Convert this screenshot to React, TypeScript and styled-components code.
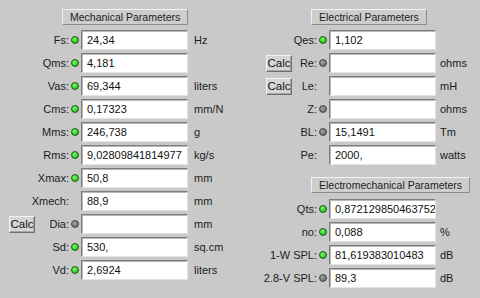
import React from "react";
import styled, { createGlobalStyle } from "styled-components";

const GlobalStyle = createGlobalStyle`
  html, body {
    margin: 0;
    padding: 0;
    background: #c9c9c9;
  }
  body {
    font-family: "Liberation Sans", Arial, sans-serif;
    font-size: 11px;
    color: #1c1c1c;
  }
`;

const Window = styled.div`
  width: 480px;
  height: 298px;
  display: flex;
  background: #c9c9c9;
  overflow: hidden;
`;

const Column = styled.div<{ $padLeft: number }>`
  width: 240px;
  padding: 9px 0 0 ${(p) => p.$padLeft}px;
  box-sizing: border-box;
  display: flex;
  flex-direction: column;
`;

const SectionTitle = styled.div<{ $indent: number; $top?: number }>`
  align-self: flex-start;
  margin: ${(p) => p.$top || 0}px 0 0 ${(p) => p.$indent}px;
  height: 16px;
  padding: 0 7px;
  display: flex;
  align-items: center;
  font-size: 10.5px;
  color: #222;
  background: #cdcdcd;
  border: 1px solid;
  border-color: #f2f2f2 #8c8c8c #8c8c8c #f2f2f2;
  box-sizing: border-box;
  white-space: nowrap;
`;

const Rows = styled.div<{ $top: number }>`
  margin-top: ${(p) => p.$top}px;
  display: flex;
  flex-direction: column;
  gap: 3px;
`;

const Row = styled.div<{ $labelW: number; $unitGap: number }>`
  display: grid;
  grid-template-columns: ${(p) => p.$labelW}px 12px 107px auto;
  align-items: center;
  height: 20px;

  & > span:last-child {
    padding-left: ${(p) => p.$unitGap}px;
  }
`;

const LabelCell = styled.div`
  display: flex;
  align-items: center;
  justify-content: flex-end;
  white-space: nowrap;
`;

const CalcButton = styled.button`
  margin-right: auto;
  width: 26px;
  height: 17px;
  padding: 0;
  font-family: "Liberation Sans", Arial, sans-serif;
  font-size: 11.5px;
  color: #111;
  background: #d6d6d6;
  border: 1px solid;
  border-color: #f4f4f4 #6e6e6e #6e6e6e #f4f4f4;
  box-shadow: inset -1px -1px 0 #a8a8a8;
`;

const Led = styled.span<{ $tone: "green" | "gray" | "none" }>`
  justify-self: center;
  width: 8px;
  height: 8px;
  border-radius: 50%;
  box-sizing: border-box;
  visibility: ${(p) => (p.$tone === "none" ? "hidden" : "visible")};
  background: ${(p) =>
    p.$tone === "green"
      ? "radial-gradient(circle at 40% 35%, #7dff6a, #22c41a 70%)"
      : "radial-gradient(circle at 40% 35%, #a4a4a4, #6f6f6f 70%)"};
  border: 1px solid ${(p) => (p.$tone === "green" ? "#1f5a18" : "#444")};
`;

const Field = styled.div`
  height: 20px;
  box-sizing: border-box;
  background: #fff;
  border: 1px solid;
  border-color: #7d7d7d #e4e4e4 #e4e4e4 #7d7d7d;
  box-shadow: inset 1px 1px 0 #b8b8b8;
  padding-left: 5px;
  display: flex;
  align-items: center;
  font-size: 11px;
  color: #111;
  overflow: hidden;
  white-space: nowrap;
`;

const Unit = styled.span`
  white-space: nowrap;
`;

type Tone = "green" | "gray" | "none";
type Param = { label: string; value: string; unit: string; led: Tone; calc?: boolean };

const mechanical: Param[] = [
  { label: "Fs:", value: "24,34", unit: "Hz", led: "green" },
  { label: "Qms:", value: "4,181", unit: "", led: "green" },
  { label: "Vas:", value: "69,344", unit: "liters", led: "green" },
  { label: "Cms:", value: "0,17323", unit: "mm/N", led: "green" },
  { label: "Mms:", value: "246,738", unit: "g", led: "green" },
  { label: "Rms:", value: "9,02809841814977", unit: "kg/s", led: "green" },
  { label: "Xmax:", value: "50,8", unit: "mm", led: "green" },
  { label: "Xmech:", value: "88,9", unit: "mm", led: "none" },
  { label: "Dia:", value: "", unit: "mm", led: "gray", calc: true },
  { label: "Sd:", value: "530,", unit: "sq.cm", led: "green" },
  { label: "Vd:", value: "2,6924", unit: "liters", led: "green" },
];

const electrical: Param[] = [
  { label: "Qes:", value: "1,102", unit: "", led: "green" },
  { label: "Re:", value: "", unit: "ohms", led: "gray", calc: true },
  { label: "Le:", value: "", unit: "mH", led: "none", calc: true },
  { label: "Z:", value: "", unit: "ohms", led: "gray" },
  { label: "BL:", value: "15,1491", unit: "Tm", led: "gray" },
  { label: "Pe:", value: "2000,", unit: "watts", led: "none" },
];

const electromechanical: Param[] = [
  { label: "Qts:", value: "0,872129850463752", unit: "", led: "green" },
  { label: "no:", value: "0,088", unit: "%", led: "green" },
  { label: "1-W SPL:", value: "81,619383010483", unit: "dB", led: "green" },
  { label: "2.8-V SPL:", value: "89,3", unit: "dB", led: "gray" },
];

const ParamRow: React.FC<{ p: Param; labelW: number; unitGap: number }> = ({ p, labelW, unitGap }) => (
  <Row $labelW={labelW} $unitGap={unitGap}>
    <LabelCell>
      {p.calc && <CalcButton>Calc</CalcButton>}
      {p.label}
    </LabelCell>
    <Led $tone={p.led} />
    <Field>{p.value}</Field>
    <Unit>{p.unit}</Unit>
  </Row>
);

export default function App() {
  return (
    <>
      <GlobalStyle />
      <Window>
        <Column $padLeft={9}>
          <SectionTitle $indent={53}>Mechanical Parameters</SectionTitle>
          <Rows $top={5}>
            {mechanical.map((p) => (
              <ParamRow key={p.label} p={p} labelW={60} unitGap={6} />
            ))}
          </Rows>
        </Column>
        <Column $padLeft={26}>
          <SectionTitle $indent={45}>Electrical Parameters</SectionTitle>
          <Rows $top={5}>
            {electrical.map((p) => (
              <ParamRow key={p.label} p={p} labelW={51} unitGap={4} />
            ))}
          </Rows>
          <SectionTitle $indent={45} $top={12}>
            Electromechanical Parameters
          </SectionTitle>
          <Rows $top={6}>
            {electromechanical.map((p) => (
              <ParamRow key={p.label} p={p} labelW={51} unitGap={4} />
            ))}
          </Rows>
        </Column>
      </Window>
    </>
  );
}
